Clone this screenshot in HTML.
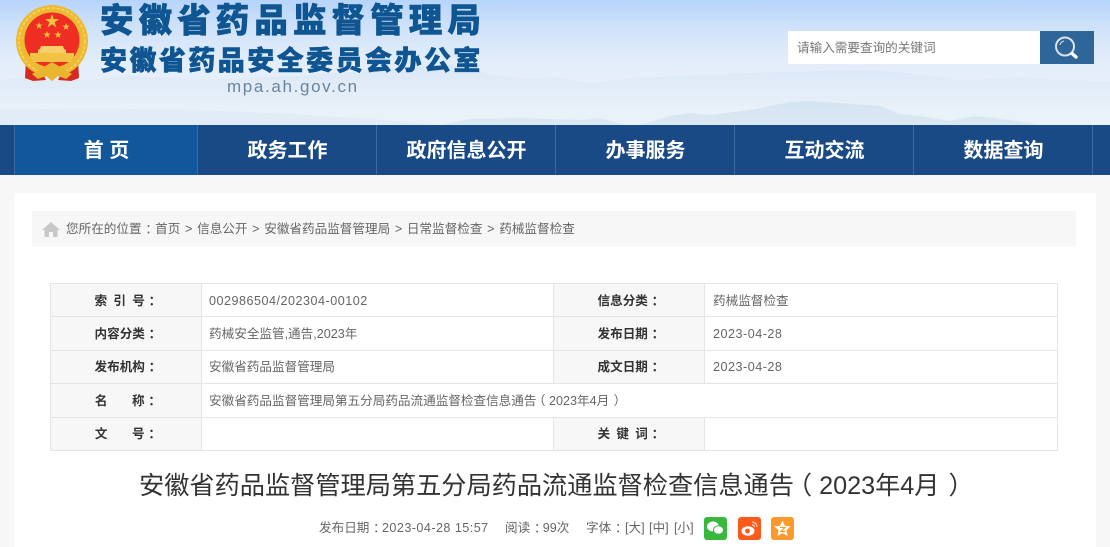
<!DOCTYPE html>
<html lang="zh-CN"><head><meta charset="utf-8"><title>安徽省药品监督管理局</title>
<style>
*{box-sizing:border-box;margin:0;padding:0}
html,body{width:1110px;height:547px;overflow:hidden;background:#f7f7f7;font-family:"Liberation Sans","Noto Sans CJK SC",sans-serif;}
.abs{position:absolute;white-space:nowrap}
.c{position:relative;left:.3em}
.n{letter-spacing:.5px}
.lp{position:relative;left:-.28em}
.rp{position:relative;left:.36em}
#hd{position:absolute;left:0;top:0;width:1110px;height:125px;overflow:hidden}
#nav{position:absolute;left:0;top:125px;width:1110px;height:50px;background:#1a4a86}
#nav div{position:absolute;top:0;height:50px;width:180px;border-left:1px solid #3f6a9f;color:#fff;font-size:20px;font-weight:700;line-height:53px;text-align:center;white-space:nowrap}
#panel{position:absolute;left:14px;top:193px;width:1082px;height:354px;background:#fff}
#crumb{position:absolute;left:32px;top:211px;width:1044px;height:36px;background:#f7f7f7;font-size:12.6px;color:#666;line-height:36px;white-space:nowrap;word-spacing:1.2px}
#crumb span.t{position:absolute;left:34px;top:0}
table{position:absolute;left:50px;top:283px;width:1007px;border-collapse:collapse;table-layout:fixed;font-size:12.6px;color:#666}
td{border:1px solid #e5e5e5;height:33.4px;padding:1px 0 0 7px;white-space:nowrap;line-height:30px}
td.l{background:#f7f7f7;color:#333;font-weight:700;padding:1px 0 0;text-align:center;word-spacing:2.8px}
td.v{padding-left:8px}
.sp{display:inline-block;width:24.6px}
#title{position:absolute;left:139px;top:468px;font-size:25.2px;line-height:36px;color:#333;white-space:nowrap}
.m{position:absolute;top:518px;font-size:12.6px;line-height:20px;color:#666;white-space:nowrap}
.ic{position:absolute;top:517px;width:23px;height:23px;border-radius:3px}
</style></head><body>
<div id="hd">
<svg width="1110" height="125" viewBox="0 0 1110 125" style="position:absolute;left:0;top:0">
<defs>
<linearGradient id="g" x1="0" y1="0" x2="0" y2="1"><stop offset="0" stop-color="#b7d4fb"/><stop offset=".22" stop-color="#cfe2fa"/><stop offset=".5" stop-color="#e4eefa"/><stop offset="1" stop-color="#e9f1f9"/></linearGradient>
<linearGradient id="m1" gradientUnits="userSpaceOnUse" x1="0" y1="68" x2="0" y2="112"><stop offset="0" stop-color="#dbe8f5"/><stop offset=".5" stop-color="#e3edf8"/><stop offset="1" stop-color="#e9f1f9"/></linearGradient>
<linearGradient id="m2" gradientUnits="userSpaceOnUse" x1="0" y1="100" x2="0" y2="125"><stop offset="0" stop-color="#d5e4f1"/><stop offset="1" stop-color="#dbe8f4"/></linearGradient>
</defs>
<rect width="1110" height="125" fill="url(#g)"/>
<path d="M0 80 L40 77 L90 80 L130 76 L200 80 L300 76 L400 68 L450 65 L490 74 L520 79 L560 78 L590 83 L640 78 L700 75 L780 72 L820 71 L860 70 L900 72 L960 80 L1020 78 L1110 82 V125 H0Z" fill="url(#m1)"/>
<path d="M0 110 C150 106 300 112 440 125 H0Z" fill="#e1ecf7"/>
<path d="M440 125 L470 119 L520 118 L580 120 L600 118 L625 125Z M640 125 L670 116 L690 113 L710 115 L750 110 L790 102 L810 101 L840 103 L880 106 L900 114 L920 116 L950 121 L975 116 L1010 120 L1040 125Z" fill="url(#m2)"/>
</svg>
<svg width="100" height="90" viewBox="0 0 100 90" style="position:absolute;left:0;top:0">
<path d="M26 60 L42 72 L46 80 L33 81 L25 78Z M78 60 L62 72 L58 80 L71 81 L79 78Z" fill="#d42a20"/>
<circle cx="52" cy="41" r="36" fill="#edbb33"/>
<circle cx="52" cy="41" r="33" fill="none" stroke="#f7d668" stroke-width="1.500" stroke-dasharray="3 2"/>
<circle cx="52" cy="40" r="27.500" fill="#ee2e22"/>
<path d="M52 14l1.700 5.100h5.400l-4.400 3.200 1.700 5.200-4.400-3.200-4.400 3.200 1.700-5.200-4.400-3.200h5.400z" fill="#f5c53c"/>
<path d="M39 22l.9 2.600h2.800l-2.300 1.600.9 2.700-2.300-1.600-2.300 1.600.9-2.700-2.300-1.600h2.800zM66 23l.9 2.600h2.800l-2.300 1.600.9 2.700-2.300-1.600-2.300 1.600.9-2.700-2.300-1.600h2.800zM47 31l.9 2.600h2.800l-2.300 1.600.9 2.700-2.300-1.600-2.300 1.600.9-2.700-2.300-1.600h2.800zM58 31l.9 2.600h2.800l-2.300 1.600.9 2.700-2.300-1.600-2.300 1.600.9-2.700-2.300-1.600h2.800z" fill="#f5c53c"/>
<path d="M41 46h22l1 3 2 1v3H38v-3l2-1z" fill="#f6cf6a"/>
<path d="M30 53h44v3l-3 6H33l-3-6z" fill="#f3c245"/>
<path d="M42 68 L52 62 L62 68 L72 74 L66 79 L58 76 L52 81 L46 76 L38 79 L32 74Z" fill="#e9b42e"/>
</svg>
<div class="abs" style="left:100px;top:1px;font-size:33.5px;line-height:42px;font-weight:900;color:#0e5592;letter-spacing:5.1px;-webkit-text-stroke:.6px #0e5592">安徽省药品监督管理局</div>
<div class="abs" style="left:100px;top:43px;font-size:27px;line-height:36px;font-weight:900;color:#0e5592;letter-spacing:2.45px;-webkit-text-stroke:.5px #0e5592">安徽省药品安全委员会办公室</div>
<div class="abs" style="left:227px;top:77px;font-size:17px;line-height:20px;color:#6a859f;letter-spacing:1.65px">mpa.ah.gov.cn</div>
<div style="position:absolute;left:788px;top:31px;width:252px;height:33px;background:#fff;font-size:12.6px;line-height:34px;color:#777;padding-left:9px">请输入需要查询的关键词</div>
<div style="position:absolute;left:1040px;top:31px;width:54px;height:33px;background:#2f6699">
<svg width="54" height="33" viewBox="0 0 54 33"><circle cx="25" cy="15.500" r="9" fill="none" stroke="#d8e3ed" stroke-width="2"/><path d="M20 14a5.500 5.500 0 0 1 4-4" fill="none" stroke="#d8e3ed"/><path d="M32 22.500 L36 26" stroke="#fff" stroke-width="3.400" stroke-linecap="round"/></svg>
</div>
</div>
<div id="nav">
<div style="left:14px;width:184px;background:#12569c">首 页</div>
<div style="left:197px">政务工作</div>
<div style="left:376px">政府信息公开</div>
<div style="left:555px">办事服务</div>
<div style="left:734px">互动交流</div>
<div style="left:913px">数据查询</div>
<div style="left:1092px;width:18px"></div>
</div>
<div id="panel"></div>
<div id="crumb">
<svg width="18" height="15" viewBox="0 0 18 15" style="position:absolute;left:10px;top:11px"><path d="M9 0 L18 8 H15.500 V15 H11 V10 H7 V15 H2.500 V8 H0Z" fill="#c8c8c8"/></svg>
<span class="t">您所在的位置<span class="c" style="margin-right:1px">：</span>首页 &gt; 信息公开 &gt; 安徽省药品监督管理局 &gt; 日常监督检查 &gt; 药械监督检查</span>
</div>
<table>
<colgroup><col style="width:151px"><col style="width:352px"><col style="width:151px"><col style="width:353px"></colgroup>
<tr><td class="l">索 引 号<span class="c">：</span></td><td><span class="n">002986504/202304-00102</span></td><td class="l">信息分类<span class="c">：</span></td><td class="v">药械监督检查</td></tr>
<tr><td class="l">内容分类<span class="c">：</span></td><td>药械安全监管,通告,2023年</td><td class="l">发布日期<span class="c">：</span></td><td class="v"><span class="n">2023-04-28</span></td></tr>
<tr><td class="l">发布机构<span class="c">：</span></td><td>安徽省药品监督管理局</td><td class="l">成文日期<span class="c">：</span></td><td class="v"><span class="n">2023-04-28</span></td></tr>
<tr><td class="l">名<span class="sp"></span>称<span class="c">：</span></td><td colspan="3" style="background:#fff">安徽省药品监督管理局第五分局药品流通监督检查信息通告<span class="lp">（</span>2023年4月<span class="rp">）</span></td></tr>
<tr><td class="l">文<span class="sp"></span>号<span class="c">：</span></td><td></td><td class="l">关 键 词<span class="c">：</span></td><td></td></tr>
</table>
<div id="title">安徽省药品监督管理局第五分局药品流通监督检查信息通告<span class="lp">（</span>2023年4月<span class="rp">）</span></div>
<div class="m" style="left:319px">发布日期<span class="c">：</span><span style="letter-spacing:.45px">2023-04-28 15:57</span></div>
<div class="m" style="left:505px">阅读<span class="c">：</span>99次</div>
<div class="m" style="left:586px">字体<span class="c">：</span></div>
<div class="m" style="left:625px">[大]</div>
<div class="m" style="left:649px">[中]</div>
<div class="m" style="left:674px">[小]</div>
<div class="ic" style="left:704px;background:#3ab83e"><svg width="23" height="23" viewBox="0 0 23 23"><ellipse cx="9" cy="9.500" rx="6" ry="5" fill="#fff"/><ellipse cx="14.500" cy="13" rx="5" ry="4.200" fill="#fff" stroke="#3ab83e"/></svg></div>
<div class="ic" style="left:738px;background:#fc5a1c"><svg width="23" height="23" viewBox="0 0 23 23"><ellipse cx="10" cy="14" rx="6.500" ry="4.800" fill="#fff"/><circle cx="9.500" cy="14" r="2.400" fill="#fc5a1c"/><path d="M14 5a5 5 0 0 1 5 5M14 8a2 2 0 0 1 2.500 2" fill="none" stroke="#ffd0b5" stroke-width="1.300"/></svg></div>
<div class="ic" style="left:771px;background:#fb9a2c"><svg width="23" height="23" viewBox="0 0 23 23"><path d="M11.500 3.500l2.400 5.300 5.800.6-4.300 3.900 1.200 5.700-5.100-2.900-5.100 2.900 1.200-5.700-4.300-3.900 5.800-.6z" fill="#fff"/><path d="M9 10.500h5l-4 4h4.500" fill="none" stroke="#fb9a2c" stroke-width="1.200"/></svg></div>
</body></html>
